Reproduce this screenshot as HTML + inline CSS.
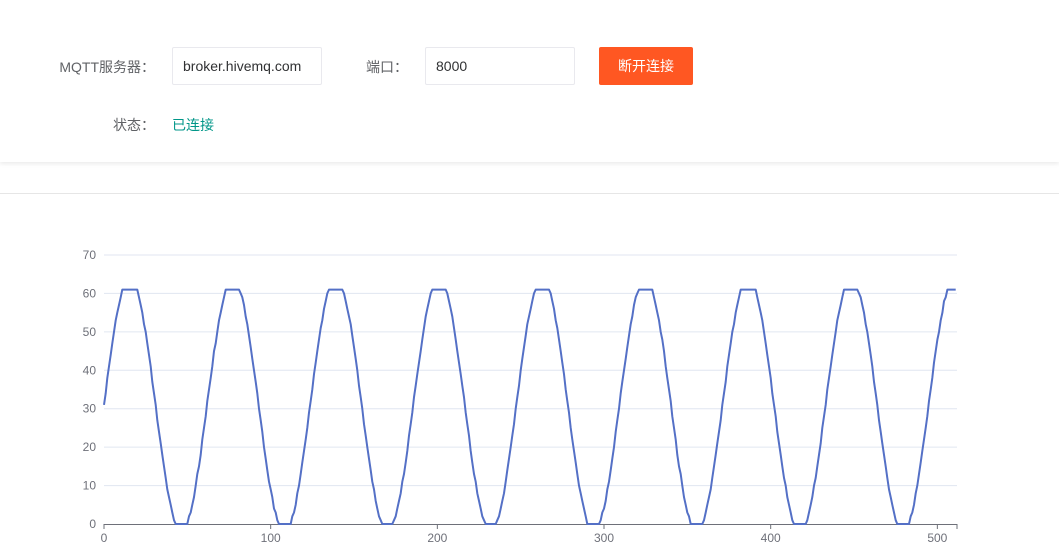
<!DOCTYPE html>
<html><head><meta charset="utf-8"><style>
body{margin:0;width:1059px;height:550px;background:#fff;font-family:"Liberation Sans","Noto Sans CJK SC",sans-serif;position:relative;overflow:hidden}
.panel{position:absolute;left:0;top:0;width:1059px;height:162px;background:#fff;box-shadow:0 2px 4px rgba(0,0,0,0.08)}
.lbl{position:absolute;font-size:14px;color:#606266;text-align:right}
.inp{position:absolute;border:1px solid #e9e9ee;border-radius:2px;height:38px;box-sizing:border-box;font-size:14px;color:#303133;line-height:36px;padding-left:10px}
.btn{position:absolute;left:599px;top:47px;width:94px;height:38px;background:#ff5722;color:#fff;font-size:14px;line-height:38px;text-align:center;border-radius:2px}
.line{position:absolute;left:0;top:193px;width:1059px;height:1px;background:#e6e6e6}
</style></head><body>
<div class="panel">
<div class="lbl" style="left:30px;top:57px;width:125px">MQTT服务器：</div>
<div class="inp" style="left:172px;top:47px;width:150px">broker.hivemq.com</div>
<div class="lbl" style="left:340px;top:57px;width:68px">端口：</div>
<div class="inp" style="left:425px;top:47px;width:150px">8000</div>
<div class="btn">断开连接</div>
<div class="lbl" style="left:90px;top:115px;width:65px">状态：</div>
<div class="lbl" style="left:172px;top:115px;color:#009688;text-align:left">已连接</div>
</div>
<div class="line"></div>
<svg id="c" width="1059" height="550" style="position:absolute;left:0;top:0" font-family="Liberation Sans, sans-serif" font-size="12" fill="#6e7079"></svg>
<script>
var s='',x0=104,xs=1.6667,y0=524,ys=269/70;
for(var i=1;i<=7;i++){var y=y0-i*10*ys;s+='<line x1="104" x2="957" y1="'+y+'" y2="'+y+'" stroke="#e0e6f1"/>';}
for(var i=0;i<=7;i++){s+='<text x="96" y="'+(y0-i*10*ys+4)+'" text-anchor="end">'+(i*10)+'</text>';}
s+='<line x1="104" x2="957" y1="524.5" y2="524.5" stroke="#6e7079"/>';
for(var i=0;i<=5;i++){var x=x0+i*100*xs;s+='<line x1="'+x+'" x2="'+x+'" y1="524" y2="529" stroke="#6e7079"/><text x="'+x+'" y="542" text-anchor="middle">'+(i*100)+'</text>';}
s+='<line x1="957" x2="957" y1="524" y2="529" stroke="#6e7079"/>';
var p='';
for(var k=0;k<=511;k++){var v=31+33*Math.sin(2*Math.PI*k/61.85);v=Math.max(0,Math.min(61,Math.round(v)));p+=(k?'L':'M')+(x0+k*xs).toFixed(1)+','+(y0-v*ys).toFixed(1);}
s+='<path d="'+p+'" fill="none" stroke="#5470c6" stroke-width="2" stroke-linejoin="round"/>';
document.getElementById('c').innerHTML=s;
</script>
</body></html>
